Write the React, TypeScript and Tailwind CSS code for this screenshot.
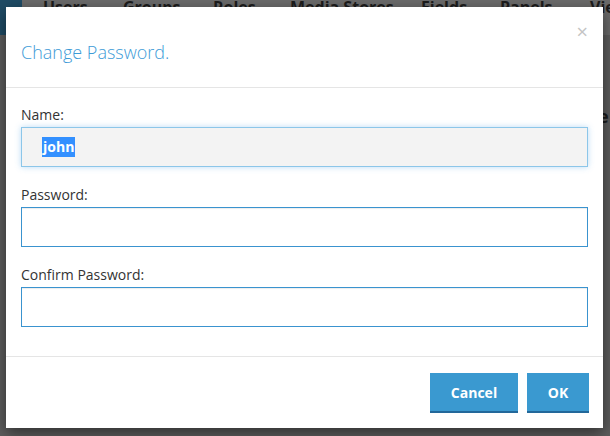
import React, { useState } from 'react';

function Field({
  label,
  value,
  onChange,
  readOnly,
}: {
  label: string;
  value: string;
  onChange?: (v: string) => void;
  readOnly?: boolean;
}) {
  return (
    <div className="mb-[18px]">
      <label className="block text-[14px] leading-[20px] text-[#333] mb-[2px]">{label}</label>
      {readOnly ? (
        <div className="h-[40px] w-full border border-[#8cc6e9] bg-[#f3f3f3] pl-[20px] flex items-center shadow-[0_0_6px_rgba(102,175,233,0.45)]">
          <span className="bg-[#3390ff] text-white font-bold text-[14px] leading-[20px] px-[1px]">{value}</span>
        </div>
      ) : (
        <input
          type="password"
          value={value}
          onChange={(e) => onChange?.(e.target.value)}
          className="block h-[40px] w-full border border-[#3a93cf] bg-white px-3 text-[14px] outline-none shadow-[inset_0_1px_1px_rgba(0,0,0,0.075)]"
        />
      )}
    </div>
  );
}

export default function App() {
  const [password, setPassword] = useState('');
  const [confirm, setConfirm] = useState('');

  return (
    <div
      className="relative w-[610px] h-[436px] overflow-hidden bg-[#5e5e5e]"
      style={{ fontFamily: '"Open Sans", "Liberation Sans", sans-serif' }}
    >
      {/* page behind the backdrop */}
      <div className="flex h-[35px] bg-[#6b6b6b] overflow-hidden">
        <div className="w-[22px] shrink-0 bg-[#1f4c66]" />
        <div className="flex shrink-0 pl-[21px] -mt-[5px] text-[16px] font-bold text-[#1c1c1c] whitespace-nowrap">
          <span className="w-[80px] shrink-0">Users</span>
          <span className="w-[90px] shrink-0">Groups</span>
          <span className="w-[77px] shrink-0">Roles</span>
          <span className="w-[131px] shrink-0">Media Stores</span>
          <span className="w-[79px] shrink-0">Fields</span>
          <span className="w-[90px] shrink-0">Panels</span>
          <span className="shrink-0">Views</span>
        </div>
      </div>
      <div className="pl-[598px] pt-[68px] text-[18px] font-bold text-[#1c1c1c]">e</div>

      {/* modal */}
      <div className="absolute left-[6px] top-[7px] w-[597px] h-[421px] bg-white shadow-[0_5px_15px_rgba(0,0,0,0.5)] flex flex-col">
        <div className="relative h-[81px] border-b border-[#e5e5e5] px-[15px] flex items-end pb-[23px]">
          <h4 className="text-[18px] leading-[24px] font-light text-[#3d9bd7]">Change Password.</h4>
          <button className="absolute right-[15px] top-[15px] text-[20px] leading-[20px] text-[#c4c4c4]">×</button>
        </div>
        <div className="flex-1 px-[15px] pt-[17px]">
          <Field label="Name:" value="john" readOnly />
          <Field label="Password:" value={password} onChange={setPassword} />
          <Field label="Confirm Password:" value={confirm} onChange={setConfirm} />
        </div>
        <div className="h-[72px] border-t border-[#e5e5e5] px-[14px] flex items-start justify-end gap-[9px] pt-[16px]">
          <button className="h-[40px] w-[88px] bg-[#3a99d0] border-b-2 border-[#22689a] text-white font-bold text-[14px]">
            Cancel
          </button>
          <button className="h-[40px] w-[62px] bg-[#3a99d0] border-b-2 border-[#22689a] text-white font-bold text-[14px]">
            OK
          </button>
        </div>
      </div>
    </div>
  );
}
